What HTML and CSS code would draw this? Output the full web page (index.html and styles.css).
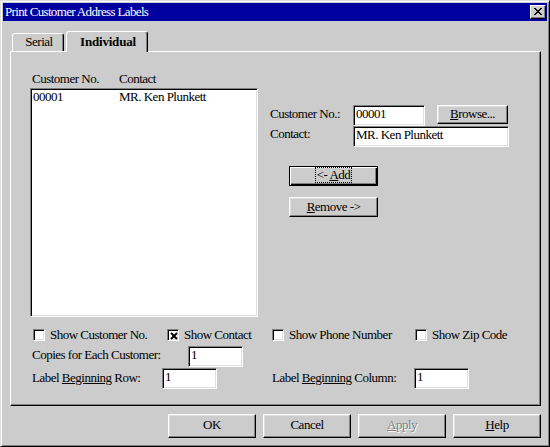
FILE: index.html
```html
<!DOCTYPE html>
<html>
<head>
<meta charset="utf-8">
<link rel="stylesheet" href="styles.css">
</head>
<body>
<div class="window">
  <div class="titlebar">
    <span class="title">Print Customer Address Labels</span>
    <div class="close">
      <svg width="8" height="7" viewBox="0 0 8 7" shape-rendering="crispEdges"><path d="M0 0h2v1h1v1h2v-1h1v-1h2v1h-1v1h-1v1h-1v1h1v1h1v1h1v1h-2v-1h-1v-1h-2v1h-1v1h-2v-1h1v-1h1v-1h1v-1h-1v-1h-1v-1h-1z" fill="#000"/></svg>
    </div>
  </div>
  <div class="content">
    <div class="tabs">
      <div class="tab">Serial</div>
      <div class="tab active">Individual</div>
    </div>
    <div class="panel">
      <div class="top">
        <div class="listcol">
          <div class="listhead"><span class="c1">Customer No.</span><span>Contact</span></div>
          <div class="listbox">
            <div class="row"><span class="c1">00001</span><span>MR. Ken Plunkett</span></div>
          </div>
        </div>
        <div class="formcol">
          <div class="frow r1">
            <span class="flabel l1">Customer No.:</span>
            <div class="field f-no">00001</div>
            <div class="btn browse"><span><u>B</u>rowse...</span></div>
          </div>
          <div class="frow r2">
            <span class="flabel l2">Contact:</span>
            <div class="field f-contact">MR. Ken Plunkett</div>
          </div>
          <div class="btn default add"><span class="focus">&lt;- <u>A</u>dd</span></div>
          <div class="btn remove"><span><u>R</u>emove -&gt;</span></div>
        </div>
      </div>
      <div class="checks">
        <label class="check"><span class="box"></span><span>Show Customer No.</span></label>
        <label class="check"><span class="box"><svg width="8" height="8" viewBox="0 0 8 8"><path d="M1 1L7 7M7 1L1 7" stroke="#000" stroke-width="2"/></svg></span><span>Show Contact</span></label>
        <label class="check"><span class="box"></span><span>Show Phone Number</span></label>
        <label class="check"><span class="box"></span><span>Show Zip Code</span></label>
      </div>
      <div class="copies">
        <span class="flabel lc">Copies for Each Customer:</span>
        <div class="field f-small">1</div>
      </div>
      <div class="begin">
        <div class="grp g1">
          <span class="flabel lr">Label <u>Beginning</u> Row:</span>
          <div class="field f-small">1</div>
        </div>
        <div class="grp g2">
          <span class="flabel lcol">Label <u>Beginning</u> Column:</span>
          <div class="field f-small">1</div>
        </div>
      </div>
    </div>
    <div class="actions">
      <div class="btn action"><span>OK</span></div>
      <div class="btn action"><span>Cancel</span></div>
      <div class="btn action disabled"><span><u>A</u>pply</span></div>
      <div class="btn action"><span><u>H</u>elp</span></div>
    </div>
  </div>
</div>
</body>
</html>
```
FILE: styles.css
```css
* { box-sizing: border-box; }

html, body {
  font-family: "Liberation Serif", "Tinos", "Times New Roman", "DejaVu Serif", serif;
}

body {
  margin: 0;
  font-size: 13px;
  letter-spacing: -0.5px;
  line-height: 14px;
  color: #000;
  background: #ccc;
}

.window {
  width: 550px;
  height: 447px;
  background: #cccccc;
  border: 1px solid;
  border-color: #dfdfdf #000 #000 #dfdfdf;
  box-shadow: inset 1px 1px #fff, inset -1px -1px #808080;
  padding: 2px;
  display: flex;
  flex-direction: column;
}

.titlebar {
  height: 18px;
  flex: none;
  background: #0000a0;
  color: #fff;
  display: flex;
  align-items: center;
  justify-content: space-between;
  padding: 0 1px 0 2px;
}
.title { letter-spacing: -0.65px; }

.close {
  width: 16px;
  height: 14px;
  background: #ccc;
  border: 1px solid;
  border-color: #fff #000 #000 #fff;
  box-shadow: inset -1px -1px #808080;
  display: flex;
  align-items: center;
  justify-content: center;
  padding: 0 1px 1px 0;
}
.close svg { display: block; }

.content {
  flex: 1;
  padding-left: 7px;
}

.tabs {
  display: flex;
  align-items: flex-end;
  height: 20px;
  margin: 10px 0 0 2px;
}

.tab {
  border: 1px solid;
  border-color: #fff #000 transparent #fff;
  border-bottom: 0;
  border-radius: 3px 3px 0 0;
  box-shadow: inset -1px 0 #808080;
  display: flex;
  justify-content: center;
  width: 52px;
  height: 18px;
  padding-top: 1px;
  padding-left: 2px;
}

.tab.active {
  position: relative;
  z-index: 1;
  width: 82px;
  height: 21px;
  margin-bottom: -1px;
  margin-left: 2px;
  padding-top: 3px;
  background: #cccccc;
  font-weight: bold;
  letter-spacing: -0.2px;
}

.panel {
  width: 531px;
  height: 355px;
  border: 1px solid;
  border-color: #fff #000 #000 #fff;
  box-shadow: inset -1px -1px #808080;
  padding: 20px 0 0 19px;
}

.top {
  display: flex;
  align-items: flex-start;
}

.listcol { width: 228px; }

.listhead {
  display: flex;
  height: 14px;
  margin-bottom: 2px;
  padding-left: 2px;
}
.listhead .c1 { width: 87px; }

.listbox {
  height: 229px;
  background: #fff;
  border: 1px solid;
  border-color: #808080 #fff #fff #808080;
  box-shadow: inset 1px 1px #000, inset -1px -1px #dfdfdf;
  padding: 1px 0 0 2px;
}
.row { display: flex; }
.row .c1 { width: 86px; }

.formcol {
  margin-left: 12px;
  padding-top: 33px;
}

.frow {
  display: flex;
  align-items: flex-start;
  height: 21px;
}
.flabel { white-space: nowrap; }
.l1 { width: 83px; margin-top: 2px; }
.l2 { width: 83px; margin-top: 1px; }

.field {
  background: #fff;
  border: 1px solid;
  border-color: #808080 #fff #fff #808080;
  box-shadow: inset 1px 1px #000, inset -1px -1px #dfdfdf;
  height: 21px;
  padding: 1px 1px 0 2px;
  white-space: nowrap;
  overflow: hidden;
}
.f-no { width: 72px; }
.f-contact { width: 156px; }
.f-small { width: 55px; }

.btn {
  background: #cccccc;
  border: 1px solid;
  border-color: #fff #000 #000 #fff;
  box-shadow: inset -1px -1px #808080, inset 1px 1px #dfdfdf;
  display: flex;
  align-items: center;
  justify-content: center;
  padding-bottom: 1px;
  white-space: nowrap;
}

.btn.default {
  border-color: #000;
  box-shadow: inset 1px 1px #fff, inset -1px -1px #000, inset -2px -2px #808080;
}

.browse {
  width: 71px;
  height: 19px;
  margin-left: 12px;
}

.add {
  width: 89px;
  height: 20px;
  margin: 19px 0 0 19px;
  padding-bottom: 3px;
}

.focus {
  outline: 1px dotted #000;
  outline-offset: 0;
  padding: 0 1px;
}

.remove {
  width: 89px;
  height: 20px;
  margin: 11px 0 0 19px;
}

.checks {
  display: grid;
  grid-template-columns: 134px 105px 143px auto;
  height: 14px;
  margin: 11px 0 0 3px;
}

.check {
  display: flex;
  align-items: center;
  gap: 5px;
  white-space: nowrap;
}

.box {
  width: 12px;
  height: 12px;
  flex: none;
  background: #fff;
  border: 1px solid;
  border-color: #808080 #fff #fff #808080;
  box-shadow: inset 1px 1px #000, inset -1px -1px #dfdfdf;
  display: flex;
  align-items: center;
  justify-content: center;
  padding: 1px 0 0 1px;
}
.box svg { display: block; }

.copies {
  display: flex;
  align-items: flex-start;
  height: 21px;
  margin: 4px 0 0 2px;
}
.lc { width: 156px; margin-top: 2px; }

.begin {
  display: flex;
  height: 21px;
  margin: 1px 0 0 2px;
}
.grp {
  display: flex;
  align-items: flex-start;
}
.g1 { width: 240px; }
.lr { width: 130px; margin-top: 3px; }
.lcol { width: 142px; margin-top: 3px; }

.actions {
  display: flex;
  justify-content: flex-end;
  gap: 7px;
  margin-top: 8px;
  padding-right: 6px;
}

.action {
  width: 88px;
  height: 24px;
  padding-bottom: 2px;
}

.disabled {
  color: #808080;
  text-shadow: 1px 1px #fff;
}
```
